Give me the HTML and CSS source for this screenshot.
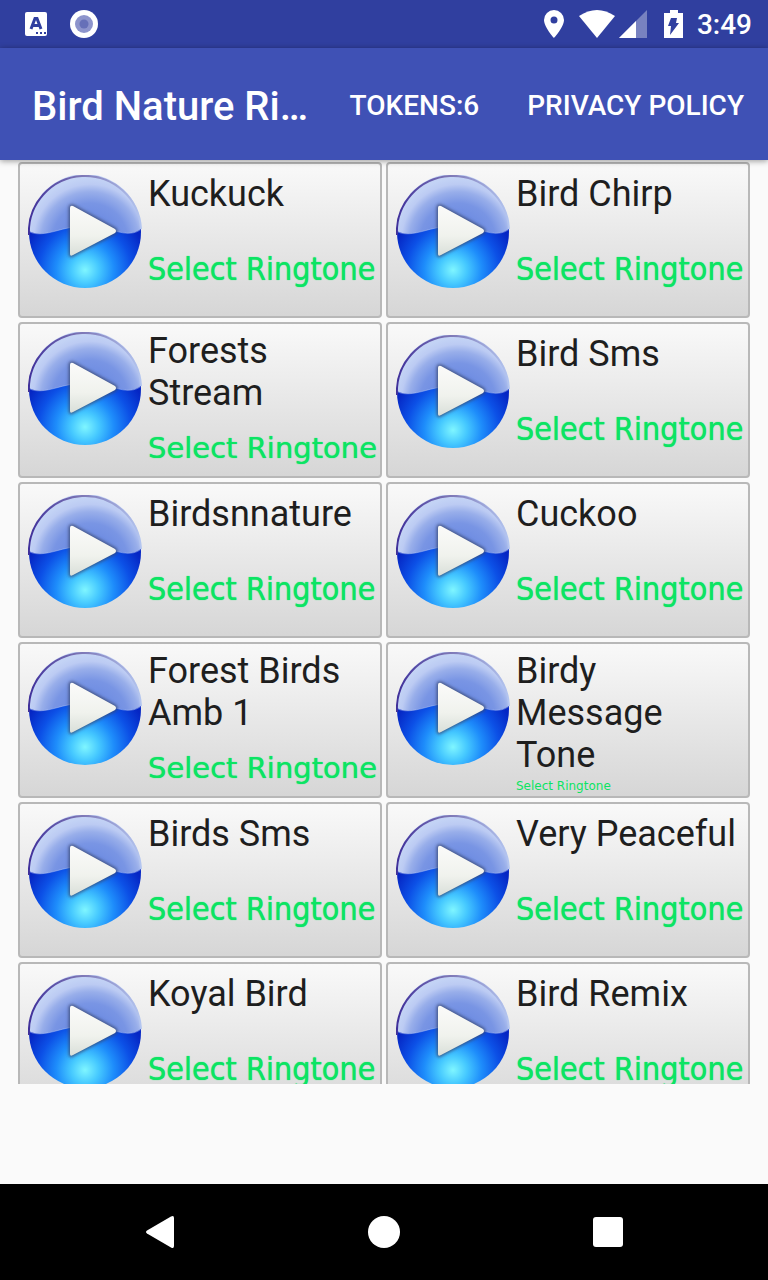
FILE: index.html
```
<!DOCTYPE html>
<html lang="en">
<head>
<meta charset="utf-8">
<meta name="viewport" content="width=device-width, initial-scale=1">
<title>Bird Nature Ringtones</title>
<link rel="stylesheet" href="styles.css">
</head>
<body>
<svg class="defs" aria-hidden="true">
  <defs>
    <radialGradient id="ball" gradientUnits="userSpaceOnUse" cx="57" cy="95" r="64">
      <stop offset="0" stop-color="#7ff6ff"/><stop offset=".22" stop-color="#45c8ff"/><stop offset=".45" stop-color="#1e8dfb"/><stop offset=".72" stop-color="#0c50e6"/><stop offset="1" stop-color="#0526c4"/>
    </radialGradient>
    <radialGradient id="gloss" gradientUnits="userSpaceOnUse" cx="62" cy="66" r="63">
      <stop offset="0" stop-color="#5c7edf"/><stop offset=".6" stop-color="#7995e4"/><stop offset=".78" stop-color="#98aeea"/><stop offset=".9" stop-color="#bccbf3"/><stop offset="1" stop-color="#c3d3f5"/>
    </radialGradient>
    <linearGradient id="rim" x1="0" y1="0" x2="1" y2="0">
      <stop offset="0" stop-color="#40309a"/><stop offset=".45" stop-color="#7b74b4"/><stop offset="1" stop-color="#b4c6f0"/>
    </linearGradient>
    <linearGradient id="arrow" x1="0" y1="0" x2="0" y2="1">
      <stop offset="0" stop-color="#fbfbfa"/><stop offset=".6" stop-color="#f0f2ed"/><stop offset="1" stop-color="#d9dfd9"/>
    </linearGradient>
    <filter id="soft" x="-20%" y="-20%" width="140%" height="140%"><feGaussianBlur stdDeviation="1.5"/></filter>
    <symbol id="play" viewBox="0 0 114 114">
      <circle cx="57" cy="57" r="56" fill="url(#ball)"/>
      <path d="M1 56A56 56 0 0 1 113 54C105 60 94 59 82 54C65 48 45 51 28 56C17 59 8 60 1 56Z" fill="url(#gloss)"/>
      <path d="M2 57C8 60 17 59 28 56C45 51 65 48 82 54C94 59 105 60 112 55" fill="none" stroke="#c4d4fa" stroke-opacity=".4"/>
      <path d="M1 60A56 56 0 0 1 113 54" fill="none" stroke="url(#rim)" stroke-width="2"/>
      <path d="M42 33V79Q42 82 45 80L87 58Q89 56 87 54L45 31Q42 30 42 33Z" fill="#37476f" stroke="#37476f" stroke-width="3" filter="url(#soft)" opacity=".75"/>
      <path d="M42 33V79Q42 82 45 80L87 58Q89 56 87 54L45 31Q42 30 42 33Z" fill="url(#arrow)"/>
    </symbol>
  </defs>
</svg>

<div class="screen">
  <div class="status">
    <div class="status-group status-left">
      <svg width="24" height="24" viewBox="0 0 24 24" aria-hidden="true"><rect x="1" width="22" height="24" rx="2" fill="#fff"/><path d="M7 17L11 6.500H13L17 17M9 13.500H15" fill="none" stroke="#303f9f" stroke-width="3"/><path d="M12 20h2v2h-2zM16 20h2v2h-2zM20 20h2v2h-2z" fill="#303f9f"/></svg>
      <svg width="28" height="28" viewBox="0 0 28 28" aria-hidden="true"><circle cx="14" cy="14" r="14" fill="#fff"/><circle cx="14" cy="14" r="9" fill="#8d94cc"/><circle cx="14" cy="14" r="4.500" fill="#6670b8"/></svg>
    </div>
    <div class="status-group">
      <svg width="20" height="28" viewBox="0 0 20 28" aria-hidden="true"><path fill="#fff" fill-rule="evenodd" d="M10 0A10 10 0 0 0 0 10C0 17 10 28 10 28S20 17 20 10A10 10 0 0 0 10 0ZM10 6.500a3.500 3.500 0 1 1 0 7a3.500 3.500 0 0 1 0-7Z"/></svg>
      <svg class="wifi" width="36" height="28" viewBox="0 0 36 28" aria-hidden="true"><path fill="#fff" d="M0 6Q18-6 36 6L18 28Z"/></svg>
      <svg class="signal" width="28" height="28" viewBox="0 0 28 28" aria-hidden="true"><path fill="#fff" fill-opacity=".35" d="M0 28L28 0V28Z"/><path fill="#fff" d="M0 28L17 11V28Z"/></svg>
      <svg class="battery" width="20" height="28" viewBox="0 0 20 28" aria-hidden="true"><path fill="#fff" d="M6 0h8v3h5v25H0V3h6Z"/><path fill="#303f9f" d="M7 8h6l-1 5h3L6 25l1-9H4Z"/></svg>
      <span class="clock">3:49</span>
    </div>
  </div>

  <header class="appbar">
    <h1 class="appbar-title">Bird Nature Ri…</h1>
    <button class="action" type="button">TOKENS:6</button>
    <button class="action" type="button">PRIVACY POLICY</button>
  </header>

  <main class="list">
    <article class="card"><button class="play" type="button" aria-label="Play Kuckuck"><svg class="play-icon"><use href="#play"/></svg></button><div class="info"><h2 class="name">Kuckuck</h2><button class="select" type="button">Select Ringtone</button></div></article>
    <article class="card"><button class="play" type="button" aria-label="Play Bird Chirp"><svg class="play-icon"><use href="#play"/></svg></button><div class="info"><h2 class="name">Bird Chirp</h2><button class="select" type="button">Select Ringtone</button></div></article>
    <article class="card card-two"><button class="play" type="button" aria-label="Play Forests Stream"><svg class="play-icon"><use href="#play"/></svg></button><div class="info"><h2 class="name">Forests Stream</h2><button class="select" type="button">Select Ringtone</button></div></article>
    <article class="card"><button class="play" type="button" aria-label="Play Bird Sms"><svg class="play-icon"><use href="#play"/></svg></button><div class="info"><h2 class="name">Bird Sms</h2><button class="select" type="button">Select Ringtone</button></div></article>
    <article class="card"><button class="play" type="button" aria-label="Play Birdsnnature"><svg class="play-icon"><use href="#play"/></svg></button><div class="info"><h2 class="name">Birdsnnature</h2><button class="select" type="button">Select Ringtone</button></div></article>
    <article class="card"><button class="play" type="button" aria-label="Play Cuckoo"><svg class="play-icon"><use href="#play"/></svg></button><div class="info"><h2 class="name">Cuckoo</h2><button class="select" type="button">Select Ringtone</button></div></article>
    <article class="card card-two"><button class="play" type="button" aria-label="Play Forest Birds Amb 1"><svg class="play-icon"><use href="#play"/></svg></button><div class="info"><h2 class="name">Forest Birds Amb 1</h2><button class="select" type="button">Select Ringtone</button></div></article>
    <article class="card card-three"><button class="play" type="button" aria-label="Play Birdy Message Tone"><svg class="play-icon"><use href="#play"/></svg></button><div class="info"><h2 class="name">Birdy Message Tone</h2><button class="select" type="button">Select Ringtone</button></div></article>
    <article class="card"><button class="play" type="button" aria-label="Play Birds Sms"><svg class="play-icon"><use href="#play"/></svg></button><div class="info"><h2 class="name">Birds Sms</h2><button class="select" type="button">Select Ringtone</button></div></article>
    <article class="card"><button class="play" type="button" aria-label="Play Very Peaceful"><svg class="play-icon"><use href="#play"/></svg></button><div class="info"><h2 class="name">Very Peaceful</h2><button class="select" type="button">Select Ringtone</button></div></article>
    <article class="card"><button class="play" type="button" aria-label="Play Koyal Bird"><svg class="play-icon"><use href="#play"/></svg></button><div class="info"><h2 class="name">Koyal Bird</h2><button class="select" type="button">Select Ringtone</button></div></article>
    <article class="card"><button class="play" type="button" aria-label="Play Bird Remix"><svg class="play-icon"><use href="#play"/></svg></button><div class="info"><h2 class="name">Bird Remix</h2><button class="select" type="button">Select Ringtone</button></div></article>
  </main>

  <nav class="navbar">
    <button class="nav-button" type="button" aria-label="Back"><svg width="32" height="32" viewBox="0 0 32 32"><path fill="#fff" d="M3 14.500L27 .5Q30-1 30 2V30Q30 33 27 31.500L3 17.500Q1 16 3 14.500Z"/></svg></button>
    <button class="nav-button" type="button" aria-label="Home"><svg width="32" height="32" viewBox="0 0 32 32"><circle cx="16" cy="16" r="16" fill="#fff"/></svg></button>
    <button class="nav-button" type="button" aria-label="Recent apps"><svg width="32" height="32" viewBox="0 0 32 32"><rect x="1" y="1" width="30" height="30" rx="3" fill="#fff"/></svg></button>
  </nav>
</div>
</body>
</html>
```
FILE: styles.css
```
* { box-sizing: border-box; }
body { margin: 0; background: #fafafa; font-family: Roboto, "Liberation Sans", sans-serif; }
button { margin: 0; padding: 0; border: 0; background: none; font: inherit; color: inherit; cursor: pointer; }
svg { display: block; flex: none; }
h1, h2 { margin: 0; }
.defs { position: absolute; width: 0; height: 0; }

.screen { display: flex; flex-direction: column; height: 100vh; }

.status { flex: none; display: flex; justify-content: space-between; height: 48px; padding: 0 16px 0 24px; background: #303f9f; color: #fff; }
.status-group { display: flex; align-items: center; }
.status-left { gap: 22px; }
.wifi { margin-left: 15px; }
.signal { margin-left: 4px; }
.battery { margin-left: 17px; }
.clock { margin-left: 13px; padding-top: 2px; font-size: 28px; font-weight: 500; line-height: 32px; }

.appbar { z-index: 1; flex: none; display: flex; align-items: center; gap: 48px; height: 112px; padding: 0 24px 0 32px; background: #3f51b5; color: #fff; box-shadow: 0 1px 6px rgba(0, 0, 0, .4); }
.appbar-title { flex: 1; min-width: 0; overflow: hidden; white-space: nowrap; font-size: 40px; font-weight: 500; line-height: 48px; padding-top: 6px; margin-right: -24px; }
.action { flex: none; font-size: 28px; font-weight: 500; line-height: 32px; padding-top: 4px; }

.list { flex: 1; min-height: 0; display: grid; grid-template-columns: repeat(2, minmax(0, 1fr)); grid-auto-rows: max-content; gap: 4px; margin-bottom: 100px; padding: 2px 18px 0; overflow-y: auto; scrollbar-width: none; }
.card { display: flex; align-items: flex-start; min-height: 156px; padding: 9px 0 0 8px; border: 2px solid #b8b8b8; border-radius: 4px; background: linear-gradient(#f9f9f9, #d6d6d6); }
.play { flex: none; padding-top: 2px; border-radius: 50%; }
.play-icon { width: 114px; height: 114px; }
.info { flex: 1; min-width: 0; display: flex; flex-direction: column; align-items: flex-start; padding-left: 6px; }
.name { padding-right: 8px; color: #1e1e1e; font-size: 36px; font-weight: 400; line-height: 42px; }
.select { margin-top: 30px; color: #0be463; font-family: "DejaVu Sans Condensed", "DejaVu Sans", sans-serif; font-size: 32px; line-height: 48px; white-space: nowrap; text-shadow: 0 0 1px #0be463; }

.card-two, .card-three { padding-top: 6px; }
.card-two .select { margin-top: 18px; font-family: "DejaVu Sans", sans-serif; font-size: 29px; line-height: 32px; }
.card-three .select { margin-top: 3px; font-family: "DejaVu Sans", sans-serif; font-size: 12px; line-height: 14px; text-shadow: none; }

.navbar { flex: none; display: flex; justify-content: center; gap: 128px; height: 96px; background: #000; }
.nav-button { display: grid; place-items: center; width: 96px; height: 96px; }
```
